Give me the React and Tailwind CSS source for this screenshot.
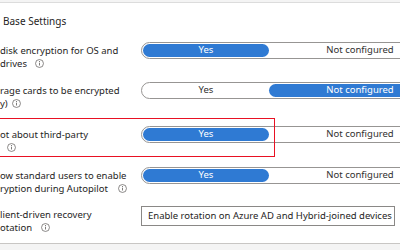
import React from "react";

function Info({ className = "" }) {
  return (
    <svg width="9" height="9" viewBox="0 0 10 10" className={"inline-block align-[-1px] " + className}>
      <circle cx="5" cy="5" r="4.4" fill="none" stroke="#605e5c" strokeWidth="0.8" />
      <rect x="4.55" y="4.1" width="0.9" height="3.1" fill="#605e5c" />
      <circle cx="5" cy="2.8" r="0.6" fill="#605e5c" />
    </svg>
  );
}

function Toggle({ value }) {
  const on = "bg-[#2f7ad3] text-white rounded-full";
  const off = "text-[#323130]";
  return (
    <div className="flex h-[17px] w-[312px] shrink-0 rounded-full border border-[#979593] p-[1px]">
      <div className={"flex w-[126px] items-center justify-center " + (value === "Yes" ? on : off)}>Yes</div>
      <div className={"flex flex-1 items-center justify-center " + (value === "Yes" ? off : on)}>Not configured</div>
    </div>
  );
}

function Row({ lines, control, height }) {
  return (
    <div className="flex items-start" style={{ height }}>
      <div className="w-[141px] shrink-0 pt-[2px] leading-[13px]">
        {lines.map((l, i) => (
          <div key={i} className="whitespace-nowrap">{l}</div>
        ))}
      </div>
      {control}
    </div>
  );
}

export default function App() {
  return (
    <div
      className="relative h-[250px] w-[400px] overflow-hidden bg-white text-[9.5px] text-[#252423]"
      style={{ fontFamily: '"Noto Sans", "Open Sans", sans-serif' }}
    >
      {/* top edge of previous block */}
      <div className="h-[2px] bg-[#f4f4f4]" />
      <div className="h-px bg-[#dcdcdc]" />

      <div className="h-[39px] pl-[3px] pt-[11px] text-[10px] leading-[14px]">Base Settings</div>

      <div className="flex flex-col">
        <Row
          height={40}
          lines={["disk encryption for OS and", <span>drives<Info className="ml-[8px]" /></span>]}
          control={<Toggle value="Yes" />}
        />
        <Row
          height={44}
          lines={["rage cards to be encrypted", <span>y)<Info className="ml-[4px]" /></span>]}
          control={<Toggle value="Not configured" />}
        />
        <Row
          height={41}
          lines={["ot about third-party", <Info className="ml-[7px]" />]}
          control={<Toggle value="Yes" />}
        />
        <Row
          height={39}
          lines={["ow standard users to enable", <span>ryption during Autopilot<Info className="ml-[10px]" /></span>]}
          control={<Toggle value="Yes" />}
        />
        <Row
          height={38}
          lines={["lient-driven recovery", <span>otation<Info className="ml-[9px]" /></span>]}
          control={
            <div className="flex h-[20px] w-[254px] shrink-0 items-center overflow-hidden border border-[#8a8886] pl-[6px] whitespace-nowrap">
              Enable rotation on Azure AD and Hybrid-joined devices
            </div>
          }
        />
      </div>

      <div className="absolute left-0 top-[243px] h-px w-full bg-[#c8c6c4]" />
      <div className="absolute left-0 top-[244px] h-[6px] w-full bg-[#f4f4f4]" />

      {/* highlight box */}
      <div className="pointer-events-none absolute -left-[2px] top-[118px] h-[39px] w-[277px] border border-[#e81123]" />
    </div>
  );
}
